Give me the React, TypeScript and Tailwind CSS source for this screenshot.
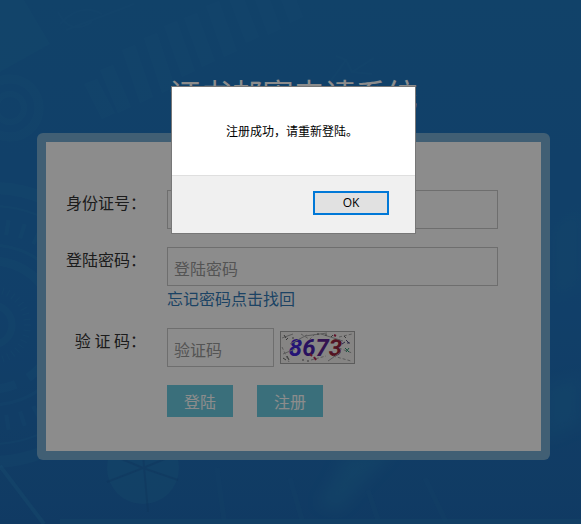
import { useState } from 'react'
import type { FormEvent } from 'react'

const gearTeeth = Array.from({ length: 40 }, (_, i) => i * 9)

// diagonal bars running up to the top right
const bars = [
  { x: 84, y: 84, h: 34 },
  { x: 100, y: 70, h: 42 },
  { x: 122, y: 50, h: 52 },
  { x: 144, y: 38, h: 54 },
  { x: 164, y: 26, h: 50 },
  { x: 184, y: 18, h: 48 },
  { x: 206, y: 6, h: 50 },
  { x: 228, y: -4, h: 46 },
  { x: 250, y: -14, h: 48 },
  { x: 272, y: -24, h: 46 },
]

function Backdrop() {
  return (
    <svg
      className="absolute inset-0 h-full w-full"
      viewBox="0 0 581 524"
      preserveAspectRatio="xMidYMid slice"
      aria-hidden="true"
    >
      <defs>
        <linearGradient id="sky" x1="0" y1="0" x2="0" y2="1">
          <stop offset="0" stopColor="#2078c0" />
          <stop offset="0.6" stopColor="#2074bf" />
          <stop offset="1" stopColor="#1e6bb5" />
        </linearGradient>
        <filter id="soft" x="-20%" y="-20%" width="140%" height="140%">
          <feGaussianBlur stdDeviation="7" />
        </filter>
      </defs>
      <rect width="581" height="524" fill="url(#sky)" />

      <path d="M0 0H24L50 44L0 72Z" fill="#2a8fc8" opacity="0.2" />
      <path d="M60 24q20 -22 42 -10M66 30L134 4M58 12q12 24 34 10" fill="none" stroke="#3593cc" strokeWidth="2" opacity="0.12" />
      <g fill="#3090cc" opacity="0.15">
        {bars.map(b => (
          <path key={b.x} d={`M${b.x} ${b.y}l13 -5l18 ${b.h}l-13 6z`} />
        ))}
      </g>

      {/* small ring */}
      <g fill="none" stroke="#3090cc" opacity="0.15">
        <circle cx="10" cy="108" r="29" strokeWidth="9" />
        <circle cx="10" cy="108" r="14" strokeWidth="6" />
      </g>

      {/* big gear on the left edge */}
      <g fill="none" stroke="#2d91cc" opacity="0.2">
        <circle cx="-8" cy="325" r="137" strokeWidth="12" />
        <circle cx="-8" cy="325" r="119" strokeWidth="2" />
        <circle cx="-8" cy="325" r="80" strokeWidth="3" />
        <circle cx="-8" cy="325" r="64" strokeWidth="9" strokeDasharray="62 14" />
        <circle cx="-8" cy="325" r="20" strokeWidth="7" />
        {gearTeeth.map(a => (
          <path key={a} d="M-8 219v15" strokeWidth="4" transform={`rotate(${a} -8 325)`} />
        ))}
        {gearTeeth.map(a => (
          <path key={a} d="M-8 286v7" strokeWidth="1" transform={`rotate(${a} -8 325)`} />
        ))}
      </g>

      {/* right side glow */}
      <path d="M581 375L545 385V440L581 425Z" fill="#2c95c8" opacity="0.22" filter="url(#soft)" />
      <path d="M581 205L552 228V300L581 286Z" fill="#2c95c8" opacity="0.12" filter="url(#soft)" />
      <path d="M330 82l16 -22l6 12l22 -14M346 60l-10 -4M352 72l20 2" fill="none" stroke="#3090cc" strokeWidth="2" opacity="0.12" />

      {/* bottom strip */}
      <path d="M0 466L44 524" fill="none" stroke="#3397cf" strokeWidth="4" opacity="0.28" />
      <circle cx="143" cy="468" r="36" fill="#2f95c8" opacity="0.24" />
      <path d="M141 432L148 512M107 482L143 468L178 480M143 468L172 456M143 468L110 454" fill="none" stroke="#1b62a8" strokeWidth="2" opacity="0.5" />
      <path d="M345 455L395 450L340 510L318 505Z" fill="#2f95c8" opacity="0.28" filter="url(#soft)" />
      <path d="M217 468L224 520M290 478L302 520M368 490L378 520M425 478L446 522" fill="none" stroke="#2f8ac8" strokeWidth="5" opacity="0.1" />
      <path d="M60 519H581V524H60Z" fill="#3397cf" opacity="0.2" />
    </svg>
  )
}

function Captcha() {
  return (
    <div className="relative flex h-[33px] w-[75px] items-center justify-center border border-[#a8a8a8] bg-[#f4f2f0]">
      <p className="pr-1 font-['Roboto',sans-serif] text-2xl leading-none font-bold italic">
        <span className="text-[#4226d8]">8</span>
        <span className="text-[#4a1fae]">6</span>
        <span className="text-[#5c2494]">7</span>
        <span className="text-[#97233f]">3</span>
      </p>
      <svg className="absolute inset-0 h-full w-full" viewBox="0 0 73 31" aria-hidden="true">
        <g fill="none" stroke="#a6a6a6" strokeWidth="1">
          <path d="M1 6L12 2M9 12L26 3M24 4L46 1M2 22L14 17M40 2L62 9M47 29L60 20" />
          <path d="M1 15L8 30M34 2L28 8M52 24L70 29M20 2l8 5M30 28L45 24M58 5L71 2M58 16L71 21" strokeDasharray="3 2" />
        </g>
        <g fill="none" stroke="#666" strokeWidth="1">
          <path d="M3 3l2 3M5 8l2 -2M2 26l3 2M6 24l2 4M21 28h2M26 29h2M44 3h2M50 5l2 -2M36 2h2M11 6h2M63 4l2 2" />
        </g>
        <path d="M33 25l2 3M29 22l2 2M53 3l2 1" stroke="#b3254f" strokeWidth="2" />
        <path d="M64 16l4 4M68 16l-3 4" stroke="#2d9472" strokeWidth="1" />
        <path d="M65 8l3 3M61 12l3 -2M66 11h3" stroke="#4f4a7c" strokeWidth="1" />
      </svg>
    </div>
  )
}

const labelClass = 'w-[100px] shrink-0 text-right leading-6 text-[#333]'
const inputClass =
  'h-[39px] border border-[#c8c8c8] bg-white px-1.5 pt-0.5 text-[#333] outline-none placeholder:text-[#999]'
const buttonClass = 'h-8 w-[66px] bg-[#6bcbe0] text-white'

export default function App() {
  const [showAlert, setShowAlert] = useState(true)

  const handleSubmit = (e: FormEvent) => {
    e.preventDefault()
  }

  return (
    <div lang="zh-CN" className="relative min-h-screen overflow-hidden bg-[#2075c0] font-['Noto_Sans_CJK_SC',sans-serif] text-base">
      <Backdrop />

      <main className="relative pt-[73px] pr-[31px] pb-16 pl-[37px]">
        <h1 className="mb-5 text-center text-[31px] leading-10 text-white">证书邮寄申请系统</h1>

        <div className="rounded-md bg-[#77add4] p-[9px]">
          <form onSubmit={handleSubmit} className="flex flex-col gap-[18px] bg-white pt-12 pr-[43px] pb-[34px]">
            <div className="flex gap-[21px]">
              <label htmlFor="idcard" className={labelClass}>身份证号：</label>
              <input id="idcard" type="text" className={`${inputClass} min-w-0 flex-1`} />
            </div>

            <div className="flex gap-[21px]">
              <label htmlFor="password" className={labelClass}>登陆密码：</label>
              <div className="flex min-w-0 flex-1 flex-col items-start">
                <input id="password" type="password" placeholder="登陆密码" className={`${inputClass} w-full`} />
                <a href="#forgot" className="leading-6 text-[#337ab7]">忘记密码点击找回</a>
              </div>
            </div>

            <div className="flex gap-[21px]">
              <label htmlFor="code" className={labelClass}>验 证 码：</label>
              <div className="flex items-center gap-1.5">
                <input id="code" type="text" placeholder="验证码" className={`${inputClass} w-[107px]`} />
                <Captcha />
              </div>
            </div>

            <div className="flex gap-6 pl-[121px]">
              <button type="submit" className={buttonClass}>登陆</button>
              <button type="button" className={buttonClass}>注册</button>
            </div>
          </form>
        </div>
      </main>

      {showAlert && (
        <div className="absolute inset-0 flex items-start justify-center bg-black/45 pt-[86px] pr-[31px] pl-[37px]">
          <div role="alertdialog" aria-describedby="alert-text" className="w-[245px] border border-[#777] bg-white text-xs text-black">
            <p id="alert-text" className="pt-9 pb-9 pl-[54px] leading-4">注册成功，请重新登陆。</p>
            <div className="flex justify-end border-t border-[#dfdfdf] bg-[#f0f0f0] pt-[15px] pr-[26px] pb-[18px]">
              <button
                type="button"
                onClick={() => setShowAlert(false)}
                className="h-6 w-[76px] border-2 border-[#0078d7] bg-[#e1e1e1] font-['Open_Sans',sans-serif] leading-none"
              >
                OK
              </button>
            </div>
          </div>
        </div>
      )}
    </div>
  )
}
